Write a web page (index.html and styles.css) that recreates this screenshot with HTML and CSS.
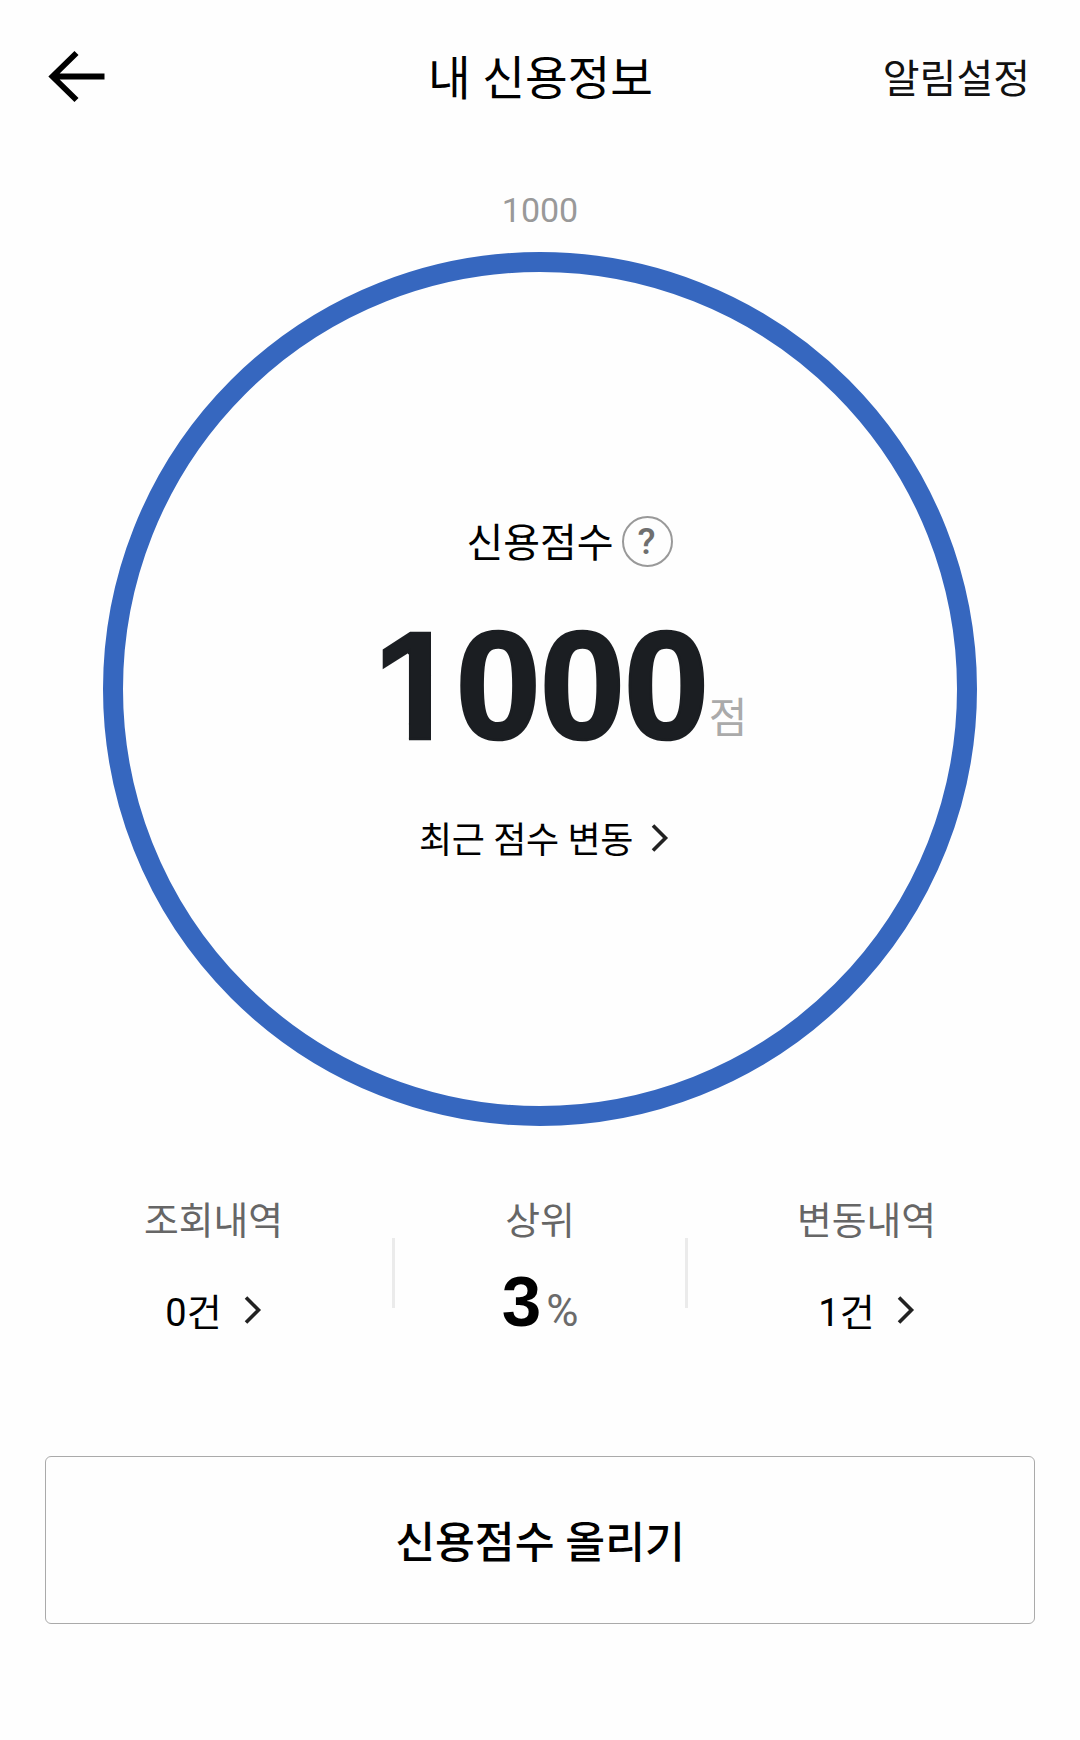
FILE: index.html
```html
<!DOCTYPE html>
<html lang="ko">
<head>
    <meta charset="UTF-8">
    <meta name="viewport" content="width=device-width, initial-scale=1.0">
    <title>내 신용정보</title>
    <link rel="stylesheet" href="styles.css">
</head>
<body>
    <header class="header">
        <button class="back" aria-label="뒤로">
            <svg width="58" height="54" viewBox="0 0 58 54">
                <path d="M28.5 3 L4.5 26.5 L28.5 50 M4.5 26.5 H56.5" fill="none" stroke="#000" stroke-width="5.8"/>
            </svg>
        </button>
        <h1 class="title">내 신용정보</h1>
        <a class="alarm">알림설정</a>
    </header>

    <main>
        <div class="max-score">1000</div>
        <section class="ring">
            <div class="ring-label">
                <span class="ring-text">신용점수</span>
                <span class="help">?</span>
            </div>
            <div class="score">
                <span class="score-num"><span class="one">1</span>000</span>
                <span class="score-unit">점</span>
            </div>
            <a class="recent">
                <span>최근 점수 변동</span>
                <svg class="arrow" width="18" height="30" viewBox="0 0 18 30"><path d="M2 2.5 L14.5 15 L2 27.5" /></svg>
            </a>
        </section>

        <section class="stats">
            <div class="stat">
                <div class="stat-label">조회내역</div>
                <a class="stat-value">0건<svg class="arrow" width="18" height="30" viewBox="0 0 18 30"><path d="M2 2.5 L14.5 15 L2 27.5" /></svg></a>
            </div>
            <div class="divider"></div>
            <div class="stat middle">
                <div class="stat-label">상위</div>
                <div class="rank"><strong>3</strong><span>%</span></div>
            </div>
            <div class="divider"></div>
            <div class="stat">
                <div class="stat-label">변동내역</div>
                <a class="stat-value">1건<svg class="arrow" width="18" height="30" viewBox="0 0 18 30"><path d="M2 2.5 L14.5 15 L2 27.5" /></svg></a>
            </div>
        </section>

        <button class="raise">신용점수 올리기</button>
    </main>
</body>
</html>
```

FILE: styles.css
```css
* {
    box-sizing: border-box;
}
body {
    margin: 0;
    background: #fefefe;
    color: #000;
    font-family: Roboto, "Noto Sans CJK KR", sans-serif;
}
button {
    padding: 0;
    background: none;
    color: inherit;
    font-family: inherit;
}
.header {
    display: grid;
    grid-template-columns: 1fr auto 1fr;
    align-items: center;
    height: 154px;
    padding: 0 50px 0 48px;
}
.back {
    width: 58px;
    height: 54px;
    border: none;
}
.back svg {
    display: block;
}
.title {
    margin: 0;
    padding: 3px 0 0 3px;
    font-size: 46.4px;
    font-weight: 400;
    line-height: 60px;
}
.alarm {
    justify-self: end;
    padding-top: 5px;
    color: #111;
    font-size: 40px;
    line-height: 60px;
}
.max-score {
    height: 98px;
    padding-top: 36px;
    color: #999;
    font-size: 34px;
    line-height: 40px;
    text-align: center;
}
.ring {
    display: flex;
    flex-direction: column;
    align-items: center;
    width: 874px;
    height: 874px;
    margin: 0 auto;
    padding-top: 244px;
    border: 20px solid #3667bf;
    border-radius: 50%;
}
.ring-label {
    display: flex;
    align-items: center;
    gap: 8px;
    height: 51px;
    margin-left: 59px;
    font-size: 40px;
    line-height: 51px;
}
.ring-text {
    padding-top: 3px;
}
.help {
    width: 51px;
    height: 51px;
    padding-right: 1px;
    border: 2px solid #999;
    border-radius: 50%;
    color: #6f6f6f;
    font-size: 37px;
    font-weight: 500;
    line-height: 47px;
    text-align: center;
}
.score {
    display: flex;
    align-items: flex-start;
    margin: 41px 0 0 40px;
    line-height: 156px;
}
.score-num {
    color: #1b1e22;
    font-family: "Liberation Sans", sans-serif;
    font-size: 153.5px;
    font-weight: 700;
    letter-spacing: -1.3px;
    -webkit-text-stroke: 2.6px #1b1e22;
}
/* plain stem, without the foot of the digit */
.one {
    display: inline-block;
    margin: 0 -2px 0 1px;
    clip-path: polygon(0 0, 57.5px 0, 57.5px 100%, 35.4px 100%, 35.4px 46px, 0 68px);
}
.score-unit {
    margin: 81px 0 0 1px;
    color: #aaa;
    font-size: 42px;
    line-height: 60px;
}
.recent {
    display: flex;
    align-items: center;
    gap: 18px;
    margin-top: 50px;
    margin-left: 8px;
    font-size: 36px;
    letter-spacing: -0.3px;
    line-height: 54px;
}
.arrow {
    margin-bottom: 6px;
    fill: none;
    stroke: #222;
    stroke-width: 3.6;
}
.stats {
    display: flex;
    height: 330px;
    padding: 70px 35px 0;
}
.stat {
    flex: 1;
    text-align: center;
}
.stat.middle {
    flex: 0 0 290px;
}
.stat-label {
    color: #666;
    font-size: 37.8px;
    line-height: 50px;
}
.stat-value {
    display: flex;
    justify-content: center;
    align-items: center;
    gap: 22px;
    margin-top: 40px;
    font-size: 38px;
    line-height: 54px;
}
.divider {
    width: 3px;
    height: 70px;
    margin-top: 42px;
    background: #ebebeb;
}
.rank {
    display: flex;
    justify-content: center;
    align-items: baseline;
    gap: 5px;
    margin-top: 16px;
    line-height: 80px;
}
.rank strong {
    font-family: "Liberation Sans", sans-serif;
    font-size: 71px;
}
.rank span {
    color: #6b6b6b;
    font-size: 44px;
}
.raise {
    display: block;
    width: 990px;
    height: 168px;
    margin: 0 auto;
    padding-bottom: 3px;
    border: 1px solid #aaa;
    border-radius: 6px;
    font-size: 43.3px;
    font-weight: 500;
}
```
